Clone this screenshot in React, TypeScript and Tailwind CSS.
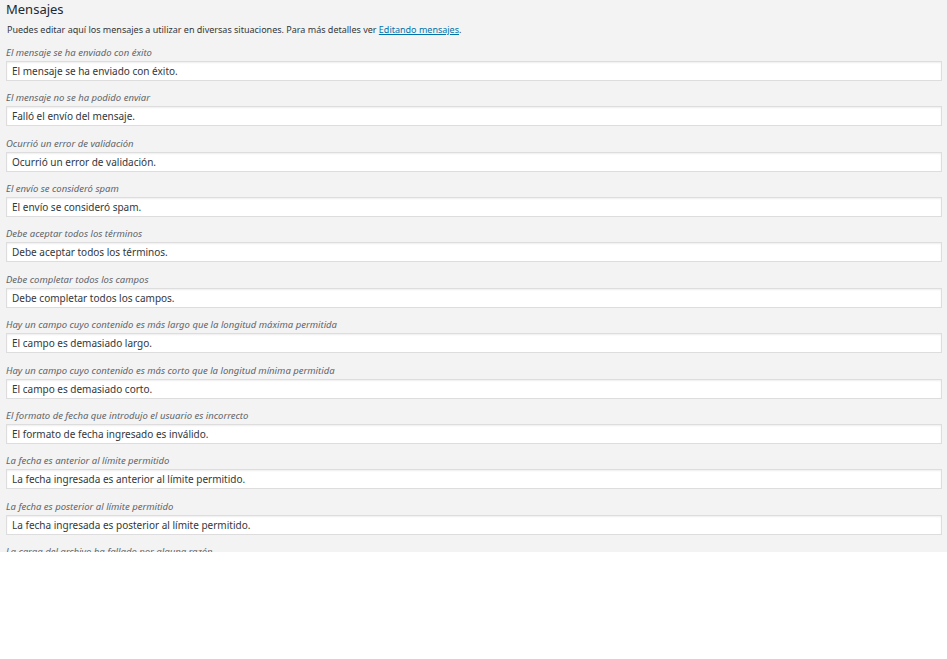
import React from "react";

const rows: [string, string][] = [
  ["El mensaje se ha enviado con éxito", "El mensaje se ha enviado con éxito."],
  ["El mensaje no se ha podido enviar", "Falló el envío del mensaje."],
  ["Ocurrió un error de validación", "Ocurrió un error de validación."],
  ["El envío se consideró spam", "El envío se consideró spam."],
  ["Debe aceptar todos los términos", "Debe aceptar todos los términos."],
  ["Debe completar todos los campos", "Debe completar todos los campos."],
  ["Hay un campo cuyo contenido es más largo que la longitud máxima permitida", "El campo es demasiado largo."],
  ["Hay un campo cuyo contenido es más corto que la longitud mínima permitida", "El campo es demasiado corto."],
  ["El formato de fecha que introdujo el usuario es incorrecto", "El formato de fecha ingresado es inválido."],
  ["La fecha es anterior al límite permitido", "La fecha ingresada es anterior al límite permitido."],
  ["La fecha es posterior al límite permitido", "La fecha ingresada es posterior al límite permitido."],
  ["La carga del archivo ha fallado por alguna razón", "Ha ocurrido un error desconocido al subir el archivo."],
];

export default function App() {
  return (
    <div className="w-[947px] h-[659px] bg-white" style={{ fontFamily: '"Noto Sans", "Open Sans", sans-serif' }}>
      <div className="h-[552px] overflow-hidden bg-[#f3f3f3] pl-[6px] pr-[5px]">
        <h2 className="text-[13px] leading-[18px] font-normal text-[#23282d]">Mensajes</h2>
        <p className="mt-[5px] text-[9px] leading-[14px] text-[#32373c] pl-[1px]">
          Puedes editar aquí los mensajes a utilizar en diversas situaciones. Para más detalles ver{" "}
          <a href="#" className="text-[#0073aa] underline">Editando mensajes</a>.
        </p>
        <div className="mt-[9px] flex flex-col gap-[10.36px]">
          {rows.map(([label, value], i) => (
            <div key={i} className="flex flex-col">
              <label className="text-[9.5px] leading-[13px] italic text-[#5f646a]">{label}</label>
              <input
                readOnly
                defaultValue={value}
                className="mt-[2px] h-[20px] w-full border border-[#dddddd] bg-white px-[5px] text-[10px] leading-[18px] text-[#32373c] shadow-[inset_0_1px_2px_rgba(0,0,0,0.07)] outline-none"
              />
            </div>
          ))}
        </div>
      </div>
    </div>
  );
}
